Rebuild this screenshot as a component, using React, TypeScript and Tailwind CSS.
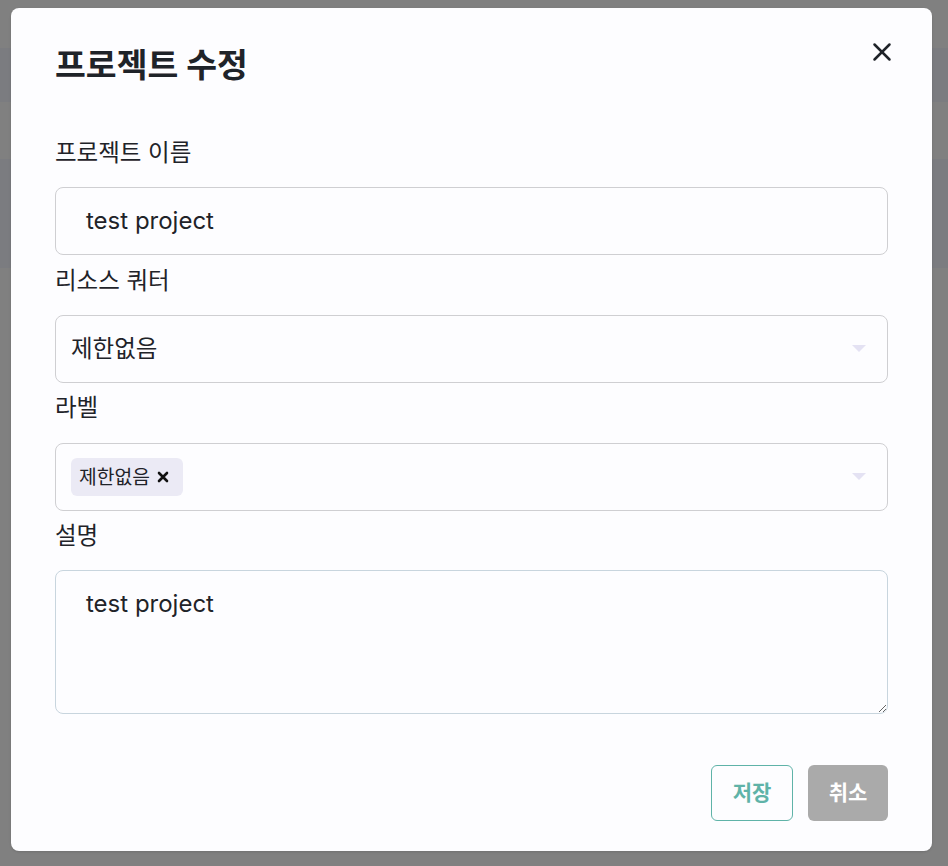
import { X } from "lucide-react";

const FONT = "font-['Inter','Noto_Sans_CJK_KR',sans-serif]";

function Caret() {
  return (
    <svg width="16" height="10" viewBox="0 0 16 10" className="shrink-0">
      <path d="M1 1 L15 1 L8 8 Z" fill="#e4e2f3" />
    </svg>
  );
}

export default function App() {
  return (
    <div className={`relative h-[866px] w-[948px] overflow-hidden bg-[#808080] ${FONT}`}>
      {/* dimmed page behind the modal */}
      <div className="flex flex-col">
        <div className="h-[48px]" />
        <div className="h-[54px] bg-[#7b7c80]" />
        <div className="h-[57px]" />
        <div className="h-[109px] bg-[#7b7c80]" />
      </div>

      {/* modal */}
      <div className="absolute left-[11px] top-[8px] flex h-[843px] w-[921px] flex-col rounded-[8px] bg-[#fdfdff] px-[44px] pt-[37px] shadow-sm">
        <div className="flex items-start justify-between">
          <h2 className="text-[33.5px] leading-[40px] font-bold text-[#1f2329]">프로젝트 수정</h2>
          <button className="-mr-[9px] -mt-[8px] text-[#1f2329]">
            <X size={30} strokeWidth={2} />
          </button>
        </div>

        <label className="mt-[53px] text-[23.5px] leading-[30px] text-[#1f2329]">프로젝트 이름</label>
        <div className="mt-[19px] flex h-[68px] items-center rounded-[8px] border border-[#cfcfd2] pl-[30px] text-[24px] text-[#1f2329]">
          test project
        </div>

        <label className="mt-[11px] text-[23.5px] leading-[30px] text-[#1f2329]">리소스 쿼터</label>
        <div className="mt-[19px] flex h-[68px] items-center justify-between rounded-[8px] border border-[#cfcfd2] pl-[15px] pr-[20px] text-[23.5px] text-[#1f2329]">
          <span>제한없음</span>
          <Caret />
        </div>

        <label className="mt-[10px] text-[23.5px] leading-[30px] text-[#1f2329]">라벨</label>
        <div className="mt-[20px] flex h-[68px] items-center justify-between rounded-[8px] border border-[#cfcfd2] pl-[15px] pr-[20px]">
          <span className="flex h-[38px] items-center gap-[7px] rounded-[6px] bg-[#ebeaf5] pl-[8px] pr-[14px] text-[19.3px] text-[#1f2329]">
            제한없음
            <svg width="12" height="12" viewBox="0 0 12 12">
              <path d="M2 2 L10 10 M10 2 L2 10" stroke="#111" strokeWidth="2.6" strokeLinecap="round" />
            </svg>
          </span>
          <Caret />
        </div>

        <label className="mt-[10px] text-[23.5px] leading-[30px] text-[#1f2329]">설명</label>
        <textarea
          defaultValue="test project"
          className="mt-[19px] h-[144px] resize-y rounded-[8px] border border-[#c8d5de] bg-transparent pl-[30px] pt-[18px] text-[24px] leading-[30px] text-[#1f2329] outline-none"
        />

        <div className="mt-[51px] flex justify-end gap-[15px]">
          <button className="h-[56px] w-[82px] rounded-[6px] border border-[#5fb3a8] text-[21px] font-bold text-[#5fb3a8]">
            저장
          </button>
          <button className="h-[56px] w-[80px] rounded-[6px] bg-[#aaaaaa] text-[21px] font-bold text-white">
            취소
          </button>
        </div>
      </div>
    </div>
  );
}
